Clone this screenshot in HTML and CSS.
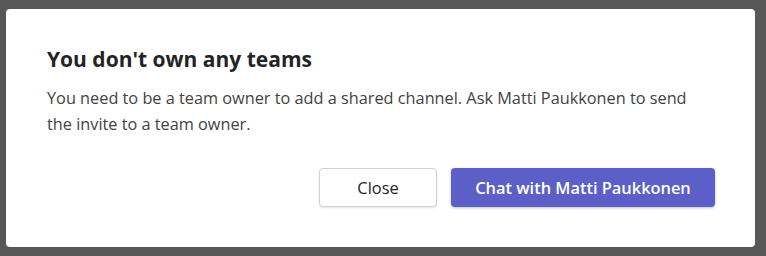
FILE: index.html
```html
<!DOCTYPE html>
<html lang="en">
<head>
    <meta charset="UTF-8">
    <title>You don't own any teams</title>
    <link rel="stylesheet" href="styles.css">
</head>
<body>
    <div class="dialog">
        <h1 class="dialog-title">You don't own any teams</h1>
        <p class="dialog-text">You need to be a team owner to add a shared channel. Ask Matti Paukkonen to send the invite to a team owner.</p>
        <div class="dialog-actions">
            <button class="btn btn-secondary">Close</button>
            <button class="btn btn-primary">Chat with Matti Paukkonen</button>
        </div>
    </div>
</body>
</html>
```

FILE: styles.css
```css
body {
    margin: 0;
    padding: 9px 11px 9px 6px;
    background: #575757;
    font-family: "Open Sans", "Noto Sans", sans-serif;
}
.dialog {
    height: 238px;
    box-sizing: border-box;
    background: #fff;
    border-radius: 4px;
    padding: 36px 40px 40px 41px;
    display: flex;
    flex-direction: column;
}
.dialog-title {
    margin: 0;
    font-size: 21px;
    line-height: 28px;
    font-weight: 700;
    color: #242424;
}
.dialog-text {
    margin: 12px 0 0;
    font-size: 16.3px;
    line-height: 26px;
    color: #424242;
}
.dialog-actions {
    margin-top: auto;
    display: flex;
    justify-content: flex-end;
    gap: 14px;
}
.btn {
    height: 39px;
    border-radius: 4px;
    font-family: inherit;
    font-size: 16.4px;
    font-weight: 600;
    cursor: pointer;
}
.btn-secondary {
    width: 118px;
    background: #fff;
    color: #242424;
    border: 1px solid #d1d1d1;
    box-shadow: 0 1px 2px rgba(0,0,0,0.12);
    font-weight: 400;
}
.btn-primary {
    width: 264px;
    background: #5b5fc7;
    color: #fff;
    border: none;
    box-shadow: 0 1px 3px rgba(0,0,0,0.25);
}
```
